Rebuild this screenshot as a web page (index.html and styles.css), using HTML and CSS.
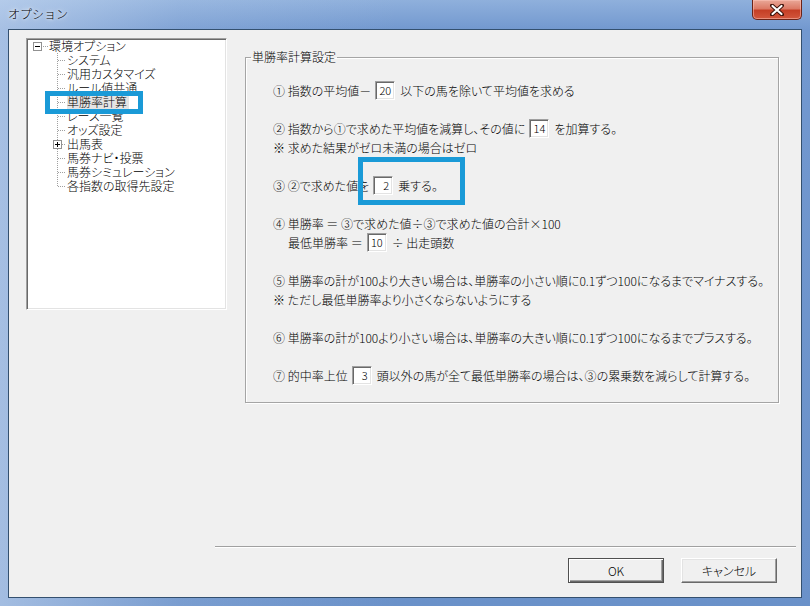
FILE: index.html
```html
<!DOCTYPE html>
<html lang="ja">
<head>
<meta charset="utf-8">
<title>オプション</title>
<link rel="stylesheet" href="styles.css">
</head>
<body>
<div class="window">
  <div class="titlebar">
    <span class="title">オプション</span>
    <div class="close">
      <svg width="14" height="12" viewBox="0 0 14 12"><path d="M2 1.5 L12 10.5 M12 1.5 L2 10.5" stroke="#3a1008" stroke-width="4" stroke-linecap="round"/><path d="M2.5 2 L11.5 10 M11.5 2 L2.5 10" stroke="#ffffff" stroke-width="2.2" stroke-linecap="round"/></svg>
    </div>
  </div>
  <div class="client">
    <div class="main">
      <div class="tree">
        <div class="row root">
          <span class="exp"><svg width="9" height="9" viewBox="0 0 9 9"><rect x="0.5" y="0.5" width="8" height="8" fill="#fff" stroke="#919191"/><path d="M2 4.5 H7" stroke="#000"/></svg></span>
          <span class="hdots"></span>
          <span class="label">環境オプション</span>
        </div>
        <div class="row child"><span class="label">システム</span></div>
        <div class="row child"><span class="label">汎用カスタマイズ</span></div>
        <div class="row child"><span class="label">ルール値共通</span></div>
        <div class="row child sel"><span class="label">単勝率計算</span></div>
        <div class="row child"><span class="label">レース一覧</span></div>
        <div class="row child"><span class="label">オッズ設定</span></div>
        <div class="row child parent">
          <span class="exp"><svg width="9" height="9" viewBox="0 0 9 9"><rect x="0.5" y="0.5" width="8" height="8" fill="#fff" stroke="#919191"/><path d="M2 4.5 H7 M4.5 2 V7" stroke="#000"/></svg></span>
          <span class="label">出馬表</span>
        </div>
        <div class="row child"><span class="label">馬券ナビ・投票</span></div>
        <div class="row child"><span class="label">馬券シミュレーション</span></div>
        <div class="row child last"><span class="label">各指数の取得先設定</span></div>
        <div class="mark mark-tree"></div>
      </div>
      <fieldset class="group">
        <legend>単勝率計算設定</legend>
        <div class="block first">
          <p class="line">① 指数の平均値－<span class="num">20</span>以下の馬を除いて平均値を求める</p>
        </div>
        <div class="block">
          <p class="line">② 指数から①で求めた平均値を減算し、その値に<span class="num">14</span>を加算する。</p>
          <p class="line">※ 求めた結果がゼロ未満の場合はゼロ</p>
        </div>
        <div class="block marked">
          <p class="line">③ ②で求めた値を<span class="num">2</span>乗する。</p>
          <div class="mark mark-group"></div>
        </div>
        <div class="block">
          <p class="line">④ 単勝率 ＝ ③で求めた値÷③で求めた値の合計×100</p>
          <p class="line indent">最低単勝率 ＝<span class="num">10</span>÷ 出走頭数</p>
        </div>
        <div class="block">
          <p class="line">⑤ 単勝率の計が100より大きい場合は、単勝率の小さい順に0.1ずつ100になるまでマイナスする。</p>
          <p class="line">※ ただし最低単勝率より小さくならないようにする</p>
        </div>
        <div class="block">
          <p class="line">⑥ 単勝率の計が100より小さい場合は、単勝率の大きい順に0.1ずつ100になるまでプラスする。</p>
        </div>
        <div class="block">
          <p class="line">⑦ 的中率上位<span class="num">3</span>頭以外の馬が全て最低単勝率の場合は、③の累乗数を減らして計算する。</p>
        </div>
      </fieldset>
    </div>
    <div class="footer">
      <div class="sep"></div>
      <div class="buttons">
        <button class="btn default">OK</button>
        <button class="btn">キャンセル</button>
      </div>
    </div>
  </div>
</div>
</body>
</html>
```
FILE: styles.css
```css
html, body {
  margin: 0;
  padding: 0;
}
body {
  width: 810px;
  height: 606px;
  overflow: hidden;
  font-family: "Noto Sans CJK JP", "Noto Sans", sans-serif;
  font-size: 12px;
  font-weight: 300;
  color: #000;
}
.window {
  width: 810px;
  height: 606px;
  display: flex;
  flex-direction: column;
  background:
    linear-gradient(to right, rgba(210,225,245,0.55) 0, rgba(210,225,245,0.15) 180px, rgba(0,0,0,0) 400px),
    linear-gradient(to bottom, #8fb0dc 0, #7298cf 30px, #6a91c9 100%);
}
.titlebar {
  height: 29px;
  padding: 0 8px;
  display: flex;
  justify-content: space-between;
  align-items: flex-start;
}
.title {
  margin-top: 6px;
  line-height: 16px;
  font-size: 12px;
  text-shadow: 0 0 6px #fff, 0 0 3px #fff;
}
.close {
  width: 50px;
  height: 20px;
  box-sizing: border-box;
  border: 1px solid #6b2317;
  border-top: none;
  border-radius: 0 0 5px 5px;
  background: linear-gradient(to bottom, #e9a898 0, #dc7a66 45%, #c53f26 55%, #d2573d 100%);
  box-shadow: inset 0 0 0 1px rgba(255,200,190,0.5);
  display: flex;
  align-items: center;
  justify-content: center;
}
.client {
  flex: 1;
  margin: 0 8px 8px;
  border: 1px solid #34506f;
  background: #f0f0f0;
  display: flex;
  flex-direction: column;
}
.main {
  flex: 1;
  display: flex;
  align-items: flex-start;
  padding: 8px 0 0 17px;
  gap: 18px;
}

/* tree */
.tree {
  position: relative;
  width: 201px;
  height: 272px;
  box-sizing: border-box;
  background: #fff;
  border: 1px solid;
  border-color: #a0a0a0 #ffffff #ffffff #a0a0a0;
  box-shadow: inset 1px 1px 0 #696969, inset -1px -1px 0 #e3e3e3;
  white-space: nowrap;
  font-feature-settings: "palt";
}
.row {
  height: 14px;
  line-height: 14px;
  display: flex;
  align-items: center;
}
.exp {
  width: 9px;
  height: 9px;
  display: flex;
}
.root {
  padding-left: 6px;
}
.hdots {
  width: 6px;
  height: 1px;
  margin-left: 1px;
  background: repeating-linear-gradient(to right, #a0a0a0 0 1px, transparent 1px 2px);
}
.child {
  padding-left: 40px;
  background:
    repeating-linear-gradient(to bottom, #a0a0a0 0 1px, transparent 1px 2px) 30px 0 / 1px 14px no-repeat,
    repeating-linear-gradient(to right, #a0a0a0 0 1px, transparent 1px 2px) 31px 7px / 8px 1px no-repeat;
}
.child.last {
  background:
    repeating-linear-gradient(to bottom, #a0a0a0 0 1px, transparent 1px 2px) 30px 0 / 1px 8px no-repeat,
    repeating-linear-gradient(to right, #a0a0a0 0 1px, transparent 1px 2px) 31px 7px / 8px 1px no-repeat;
}
.child.parent {
  padding-left: 26px;
}
.child.parent .label {
  margin-left: 5px;
}
.sel .label {
  background: #e4e4e4;
  padding-right: 2px;
}
.mark {
  position: absolute;
  box-sizing: border-box;
  border: 5px solid #1a9ad7;
  pointer-events: none;
}
.mark-tree {
  left: 18px;
  top: 52px;
  width: 98px;
  height: 23px;
}

/* group box */
.group {
  margin: 12px 0 0;
  padding: 0 0 17px 5px;
  width: 534px;
  box-sizing: border-box;
  border: 1px solid #a5a5a5;
  box-shadow: 1px 1px 0 #fff, inset 1px 1px 0 #fff;
  font-feature-settings: "palt";
  min-inline-size: 0;
}
.group legend {
  padding: 0 1px;
  line-height: 14px;
}
.block {
  margin-top: 19px;
  padding-left: 22px;
}
.block.first {
  margin-top: 17px;
}
.block.marked {
  position: relative;
}
.line {
  margin: 0;
  line-height: 19px;
  height: 19px;
  white-space: nowrap;
}
.indent {
  padding-left: 15px;
}
.num {
  display: inline-block;
  box-sizing: border-box;
  width: 20px;
  height: 19px;
  margin: 0 5px 0 4px;
  vertical-align: top;
  background: #fff;
  border: 1px solid;
  border-color: #a0a0a0 #ffffff #ffffff #a0a0a0;
  box-shadow: inset 1px 1px 0 #696969, inset -1px -1px 0 #e3e3e3;
  text-align: right;
  padding-right: 3px;
  line-height: 17px;
  font-size: 11px;
}
.mark-group {
  left: 107px;
  top: -19px;
  width: 107px;
  height: 48px;
}

/* footer */
.footer {
  height: 51px;
  box-sizing: border-box;
  padding-bottom: 14px;
}
.sep {
  height: 0;
  margin: 0 5px 0 206px;
  border-top: 1px solid #a0a0a0;
  border-bottom: 1px solid #fff;
}
.buttons {
  margin-top: 10px;
  display: flex;
  justify-content: flex-end;
  gap: 17px;
  padding-right: 24px;
}
.btn {
  width: 96px;
  height: 25px;
  box-sizing: border-box;
  margin: 0;
  padding: 0;
  font-family: inherit;
  font-size: 12px;
  font-weight: 300;
  font-feature-settings: "palt";
  color: #000;
  background: #f0f0f0;
  border: 1px solid;
  border-color: #ffffff #696969 #696969 #ffffff;
  box-shadow: inset -1px -1px 0 #a0a0a0, inset 1px 1px 0 #e3e3e3;
  border-radius: 0;
}
.btn.default {
  border-color: #505050;
  box-shadow: inset 1px 1px 0 #ffffff, inset -1px -1px 0 #696969, inset -2px -2px 0 #a0a0a0;
}
```
